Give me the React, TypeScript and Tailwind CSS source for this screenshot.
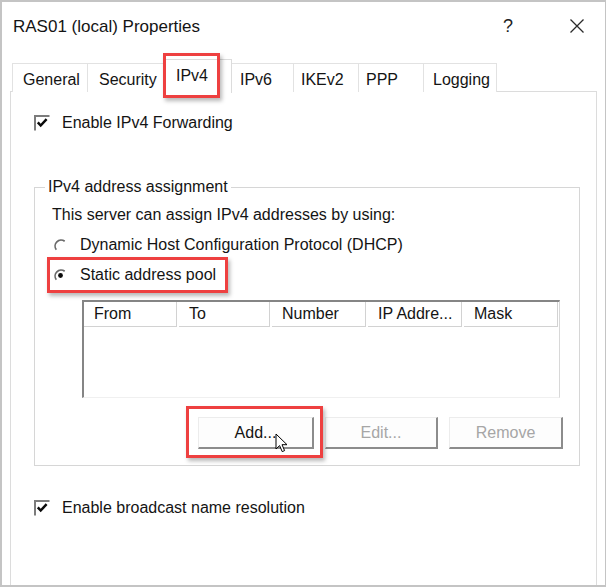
import React from "react";

function CheckBox() {
  return (
    <svg width="16" height="16" viewBox="0 0 16 16" className="shrink-0">
      <path d="M1 15.5V1h14.5" stroke="#7c7c7c" strokeWidth="2" fill="none" />
      <path d="M3.8 7.4l2.9 3.1L12.6 4.2" stroke="#0a0a0a" strokeWidth="2.5" fill="none" />
    </svg>
  );
}

function Radio({ checked }: { checked?: boolean }) {
  return (
    <svg width="15" height="15" viewBox="0 0 15 15" className="shrink-0">
      <path d="M11.7 3.3A6 6 0 0 0 3.3 11.7" stroke="#6a6a6a" strokeWidth="1.7" fill="none" />
      {checked && <circle cx="7.5" cy="7.5" r="2.4" fill="#0a0a0a" />}
    </svg>
  );
}

export default function App() {
  const tabs = [
    { label: "General", cls: "w-[75px] pl-[10px]" },
    { label: "Security", cls: "w-[76px] pl-[11px]" },
  ];
  const tabsAfter = [
    { label: "IPv6", cls: "w-[61px] pl-[8px]" },
    { label: "IKEv2", cls: "w-[65px] pl-[7px]" },
    { label: "PPP", cls: "w-[65px] pl-[7px]" },
    { label: "Logging", cls: "w-[74px] pl-[9px]" },
  ];
  return (
    <div className="w-[606px] h-[587px] flex flex-col bg-white border-t-2 border-l-2 border-b-2 border-r border-[#c4c4c4] overflow-hidden text-[16px] text-[#141414] font-[family-name:'Liberation_Sans',Arial,sans-serif]">
      {/* title bar */}
      <div className="h-[48px] shrink-0 flex items-center pl-[11px] pr-[20px]">
        <span className="text-[17px] leading-none">RAS01 (local) Properties</span>
        <span className="ml-auto text-[18px] leading-none text-[#222]">?</span>
        <svg width="16" height="16" viewBox="0 0 16 16" className="ml-[56px]">
          <path d="M1.5 1.5l13 13M14.5 1.5l-13 13" stroke="#2a2a2a" strokeWidth="1.3" />
        </svg>
      </div>

      {/* tabs */}
      <div className="h-[42px] shrink-0 flex items-end pl-[10px] relative z-10">
        {tabs.map((t) => (
          <div key={t.label} className={`${t.cls} h-[29px] flex items-center pt-[3px] border-t border-l border-[#e2e2e2] bg-white leading-none`}>
            {t.label}
          </div>
        ))}
        <div className="relative w-[69px] h-[34px] -mb-px flex items-center pl-[12px] pb-[2px] border-t border-l border-r border-[#dcdcdc] bg-white leading-none">
          IPv4
          <span className="absolute -left-[1px] -top-[7px] w-[57px] h-[45px] border-[3px] border-[#ee4040] shadow-[2px_3px_4px_rgba(0,0,0,0.28)]" />
        </div>
        {tabsAfter.map((t, i) => (
          <div
            key={t.label}
            className={`${t.cls} h-[29px] flex items-center pt-[3px] border-t border-[#e2e2e2] ${i === 0 ? "" : "border-l"} ${i === tabsAfter.length - 1 ? "border-r" : ""} bg-white leading-none`}
          >
            {t.label}
          </div>
        ))}
      </div>

      {/* panel */}
      <div className="ml-[8px] mr-[8px] -mt-px flex-1 border border-b-0 border-[#dcdcdc] flex flex-col">
        <div className="mt-[21px] h-[20px] flex items-center pl-[23px]">
          <CheckBox />
          <span className="ml-[12px] leading-[20px]">Enable IPv4 Forwarding</span>
        </div>

        <fieldset className="mt-[44px] ml-[23px] w-[546px] border border-[#d6d6d6] pb-[16px]">
          <legend className="ml-[10px] px-[3px] leading-[20px]">IPv4 address assignment</legend>
          <div className="mt-[8px] ml-[17px] leading-[20px]">This server can assign IPv4 addresses by using:</div>
          <div className="mt-[10px] ml-[18px] h-[20px] flex items-center">
            <Radio />
            <span className="ml-[12px] leading-[20px]">Dynamic Host Configuration Protocol (DHCP)</span>
          </div>
          <div className="mt-[10px] ml-[18px] h-[20px] flex items-center relative w-fit">
            <Radio checked />
            <span className="ml-[12px] leading-[20px]">Static address pool</span>
            <span className="absolute -left-[6px] -top-[8px] w-[181px] h-[36px] border-[3px] border-[#ee4040] shadow-[2px_3px_4px_rgba(0,0,0,0.28)]" />
          </div>

          {/* list view */}
          <div className="mt-[15px] ml-[47px] w-[478px] h-[98px] border-t-2 border-l-2 border-[#858585] border-r border-b border-r-[#d8d8d8] border-b-[#f0f0f0] bg-white">
            <div className="h-[25px] flex gap-[2px] leading-none">
              <div className="w-[93px] h-full flex items-center pl-[10px] border-r border-b border-[#d2d2d2]">From</div>
              <div className="w-[91px] h-full flex items-center pl-[10px] border-r border-b border-[#d2d2d2]">To</div>
              <div className="w-[94px] h-full flex items-center pl-[10px] border-r border-b border-[#d2d2d2]">Number</div>
              <div className="w-[94px] h-full flex items-center pl-[10px] border-r border-b border-[#d2d2d2]">IP Addre...</div>
              <div className="w-[94px] h-full flex items-center pl-[10px] border-r border-b border-[#d2d2d2]">Mask</div>
            </div>
          </div>

          {/* buttons */}
          <div className="mt-[19px] ml-[163px] flex gap-[11px]">
            <div className="relative w-[116px] h-[32px] flex items-center justify-center border-t border-l border-[#ececec] border-r-2 border-b-2 border-r-[#8c8c8c] border-b-[#8c8c8c] bg-[#fdfdfd] leading-none">
              Add...
              <span className="absolute -left-[13px] -top-[12px] w-[137px] h-[52px] border-[3px] border-[#ee4040] shadow-[2px_3px_4px_rgba(0,0,0,0.28)]" />
              <svg width="13" height="20" viewBox="0 0 13 20" className="absolute left-[76px] top-[15px]">
                <path d="M1 1v15l3.6-3.4 2.6 6 2.4-1-2.6-5.9H12z" fill="#fff" stroke="#000" strokeWidth="1" strokeLinejoin="round" />
              </svg>
            </div>
            <div className="w-[113px] h-[32px] flex items-center justify-center border-t border-l border-[#ececec] border-r-2 border-b-2 border-r-[#8c8c8c] border-b-[#8c8c8c] bg-[#fdfdfd] leading-none text-[#a6a6a6]">
              Edit...
            </div>
            <div className="w-[114px] h-[32px] flex items-center justify-center border-t border-l border-[#ececec] border-r-2 border-b-2 border-r-[#8c8c8c] border-b-[#8c8c8c] bg-[#fdfdfd] leading-none text-[#a6a6a6]">
              Remove
            </div>
          </div>
        </fieldset>

        <div className="mt-[32px] h-[20px] flex items-center pl-[23px]">
          <CheckBox />
          <span className="ml-[12px] leading-[20px]">Enable broadcast name resolution</span>
        </div>
      </div>
    </div>
  );
}
